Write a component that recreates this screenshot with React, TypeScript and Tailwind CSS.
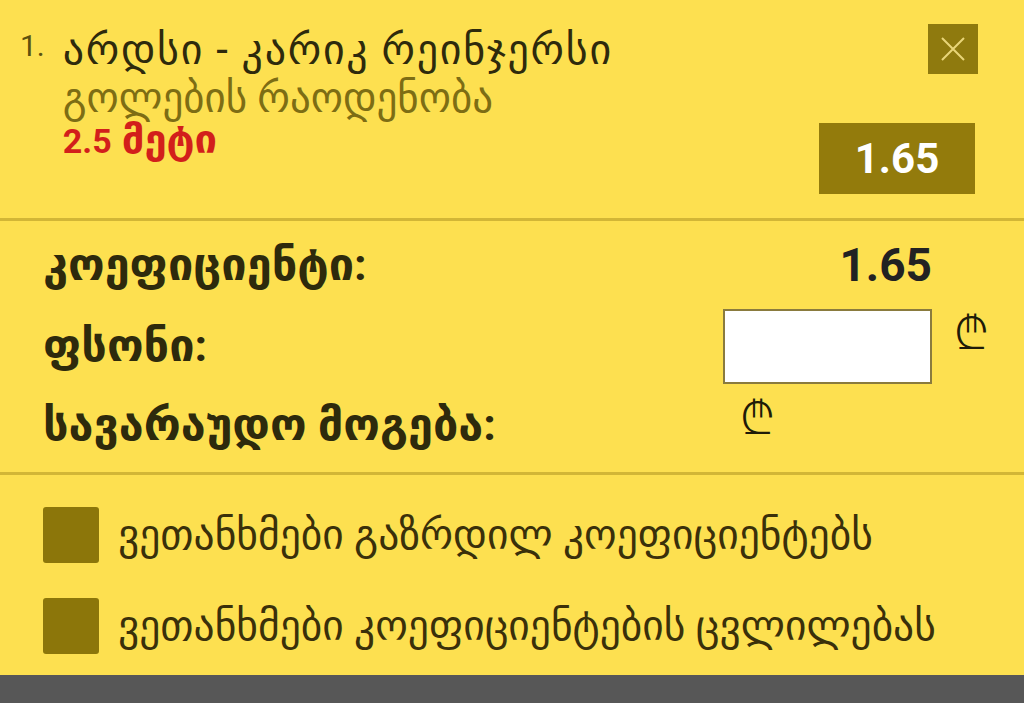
import { useState } from "react";

const font = "font-['Roboto','DejaVu_Sans',sans-serif]";

function Lari({ className }: { className?: string }) {
    return (
        <span className={`text-[#1f1b08] text-[46px] leading-none font-light font-['Noto_Sans','DejaVu_Sans',sans-serif] ${className ?? ""}`}>
            ₾
        </span>
    );
}

function Check({ label }: { label: string }) {
    const [on, setOn] = useState(false);
    return (
        <label className="flex items-center gap-[19px] cursor-pointer">
            <span
                onClick={() => setOn(!on)}
                className="w-[56px] h-[56px] rounded-[3px] bg-[#8c760a] shrink-0 flex items-center justify-center text-white"
            >
                {on ? "✓" : null}
            </span>
            <span className="text-[41.5px] leading-[56px] text-[#3a300a]">{label}</span>
        </label>
    );
}

export default function App() {
    const [stake, setStake] = useState("");

    return (
        <div className={`w-[1024px] h-[703px] bg-[#fde050] flex flex-col ${font}`}>
            {/* header */}
            <div className="h-[218px] flex justify-between pl-[20px] pr-[46px] pt-[24px]">
                <div className="flex gap-[18px] pt-[4px]">
                    <span className="text-[30px] text-[#5c520f] leading-[36px]">1.</span>
                    <div className="flex flex-col">
                        <span className="text-[42px] tracking-[1.7px] leading-[44px] text-[#2e2a0c]">არდსი - კარიკ რეინჯერსი</span>
                        <span className="text-[41px] leading-[46px] mt-[3px] text-[#7d6d14]">გოლების რაოდენობა</span>
                        <div className="flex items-baseline gap-[10px] font-bold text-[#d21f1b] mt-[2px]">
                            <span className="inline-block text-[34px] leading-[34px]">2.5</span>
                            <span className="inline-block text-[40px] leading-[34px]">მეტი</span>
                        </div>
                    </div>
                </div>
                <div className="flex flex-col items-end">
                    <button className="w-[50px] h-[50px] bg-[#8f7a0e] flex items-center justify-center">
                        <svg width="26" height="26" viewBox="0 0 26 26">
                            <path d="M2 2 L24 24 M24 2 L2 24" stroke="#e9d578" strokeWidth="2" />
                        </svg>
                    </button>
                    <div className="mt-[49px] mr-[3px] w-[156px] h-[71px] bg-[#937b0c] flex items-center justify-center text-white font-bold text-[42px]">
                        1.65
                    </div>
                </div>
            </div>
            <div className="h-[3px] bg-[#d2b636]" />

            {/* stake rows */}
            <div className="h-[251px] pl-[43px] pr-[20px] flex flex-col">
                <div className="h-[86px] flex items-center justify-between pt-[2px] pr-[18px]">
                    <span className="text-[45px] leading-[50px] font-bold text-[#2e2a0c]">კოეფიციენტი:</span>
                    <span className="text-[46px] font-bold text-[#222] mr-[54px]">1.65</span>
                </div>
                <div className="h-[78px] flex items-center">
                    <span className="text-[45px] leading-[50px] font-bold text-[#2e2a0c] w-[680px] shrink-0">ფსონი:</span>
                    <input
                        value={stake}
                        onChange={(e) => setStake(e.target.value)}
                        className="w-[209px] h-[75px] shrink-0 bg-white border-2 border-[#8a7b3e] outline-none px-3 text-[28px]"
                    />
                    <Lari className="ml-[22px] mb-[30px]" />
                </div>
                <div className="h-[80px] flex items-center">
                    <span className="text-[45px] leading-[50px] font-bold text-[#2e2a0c] w-[697px] shrink-0">სავარაუდო მოგება:</span>
                    <Lari className="mb-[18px]" />
                </div>
            </div>
            <div className="h-[3px] bg-[#d2b636]" />

            {/* agreements */}
            <div className="flex-1 flex flex-col pl-[43px] pt-[32px] gap-[35px]">
                <Check label="ვეთანხმები გაზრდილ კოეფიციენტებს" />
                <Check label="ვეთანხმები კოეფიციენტების ცვლილებას" />
            </div>
            <div className="h-[28px] bg-[#575757]" />
        </div>
    );
}
